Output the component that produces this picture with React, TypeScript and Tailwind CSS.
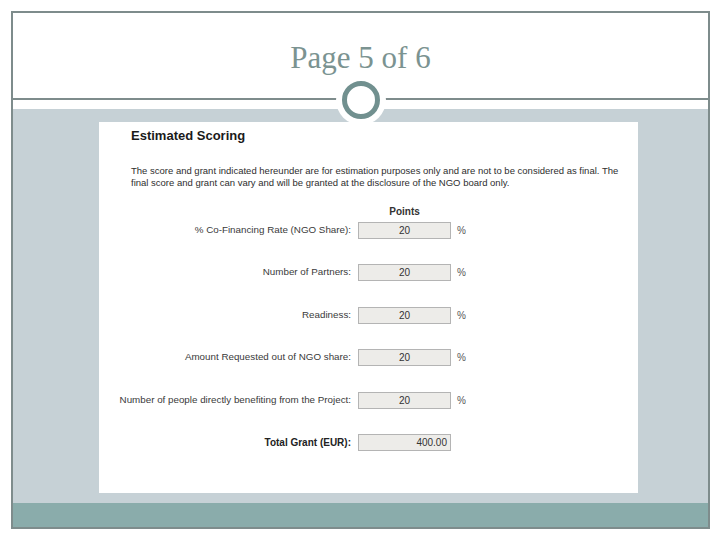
const rows = [
  { label: '% Co-Financing Rate (NGO Share):', value: '20' },
  { label: 'Number of Partners:', value: '20' },
  { label: 'Readiness:', value: '20' },
  { label: 'Amount Requested out of NGO share:', value: '20' },
  { label: 'Number of people directly benefiting from the Project:', value: '20' },
];

function RingMarker() {
  // white halo that cuts the divider line, with the teal ring on top
  return (
    <div className="absolute left-1/2 top-[87px] flex h-[50px] w-[50px] -translate-x-1/2 -translate-y-1/2 items-center justify-center rounded-full bg-white">
      <div className="h-[38px] w-[38px] rounded-full border-[5px] border-[#71908f]" />
    </div>
  );
}

function ScoreRow({ label, value }: { label: string; value: string }) {
  return (
    <div className="flex h-[17px] items-center">
      <div className="w-[252px] whitespace-nowrap text-right text-[9.8px] text-[#3a3a3a]">{label}</div>
      <div className="ml-[7px] flex h-[17px] w-[93px] items-center justify-center border border-[#b4b4b4] bg-[#edece9] text-[10px] text-[#333]">
        {value}
      </div>
      <div className="ml-[6px] text-[10px] text-[#555]">%</div>
    </div>
  );
}

export default function App() {
  return (
    <div className="h-[540px] w-[720px] bg-white pl-[11px] pt-[11px] font-['Liberation_Sans',Arial,sans-serif]">
      <div className="relative flex h-[518px] w-[699px] flex-col border-2 border-[#7e8c8c]">
        <div className="flex h-[87px] items-start justify-center border-b-2 border-[#7e8c8c]">
          <h1 className="mt-[29px] font-['Liberation_Serif',Georgia,serif] text-[31px] leading-none text-[#7b9391]">
            Page 5 of 6
          </h1>
        </div>
        <div className="h-[9px] bg-white" />
        <div className="flex flex-1 flex-col bg-[#c6d1d6] pl-[86px] pr-[70px] pt-[13px] pb-[10px]">
          <div className="flex-1 bg-white">
            <div className="px-[32px] pt-[4px]">
              <h2 className="text-[13px] font-bold text-[#1a1a1a]">Estimated Scoring</h2>
              <p className="mt-[19px] whitespace-nowrap text-[9.5px] leading-[12px] text-[#2e2e2e]">
                The score and grant indicated hereunder are for estimation purposes only and are not to be considered as final. The
                <br />
                final score and grant can vary and will be granted at the disclosure of the NGO board only.
              </p>
            </div>
            <div className="mt-[15px] flex">
              <div className="ml-[259px] w-[93px] text-center text-[10px] font-bold text-[#333]">Points</div>
            </div>
            <div className="mt-[3px] flex flex-col gap-[25.5px]">
              {rows.map((r) => (
                <ScoreRow key={r.label} label={r.label} value={r.value} />
              ))}
              <div className="flex h-[17px] items-center">
                <div className="w-[252px] text-right text-[10px] font-bold text-[#222]">Total Grant (EUR):</div>
                <div className="ml-[7px] flex h-[17px] w-[93px] items-center justify-end border border-[#b4b4b4] bg-[#edece9] pr-[3px] text-[10px] text-[#333]">
                  400.00
                </div>
              </div>
            </div>
          </div>
        </div>
        <div className="h-[24px] bg-[#8aacab]" />
        <RingMarker />
      </div>
    </div>
  );
}
